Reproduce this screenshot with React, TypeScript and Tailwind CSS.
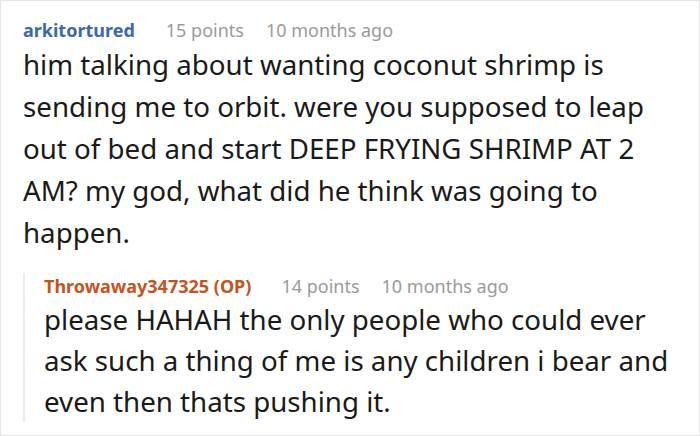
export default function App() {
  return (
    <div
      className="w-[700px] h-[436px] bg-white border border-[#e4e4e4] box-border overflow-hidden"
      style={{ fontFamily: '"Noto Sans", "Open Sans", sans-serif' }}
    >
      <div className="pl-[22px] pt-[16px]">
        <div className="flex items-baseline text-[18px] leading-[26px]">
          <span className="font-bold text-[#3b68ad]">arkitortured</span>
          <span className="ml-[31px] text-[#9a9a9a]">15 points</span>
          <span className="ml-[22px] text-[#9a9a9a]">10 months ago</span>
        </div>
        <p className="text-[27.7px] leading-[42px] text-[#1a1a1a] w-[650px]">
          him talking about wanting coconut shrimp is sending me to orbit. were you supposed to leap out of bed and start DEEP FRYING SHRIMP AT 2 AM? my god, what did he think was going to happen.
        </p>
      </div>
      <div className="ml-[22px] mt-[20px] border-l-2 border-[#ececec] pl-[19px]">
        <div className="flex items-baseline text-[18px] leading-[26px]">
          <span className="font-bold text-[#c4541f]">Throwaway347325 (OP)</span>
          <span className="ml-[30px] text-[#9a9a9a]">14 points</span>
          <span className="ml-[22px] text-[#9a9a9a]">10 months ago</span>
        </div>
        <p className="text-[27.7px] leading-[41px] text-[#1a1a1a] w-[640px]">
          please HAHAH the only people who could ever ask such a thing of me is any children i bear and even then thats pushing it.
        </p>
      </div>
    </div>
  );
}
